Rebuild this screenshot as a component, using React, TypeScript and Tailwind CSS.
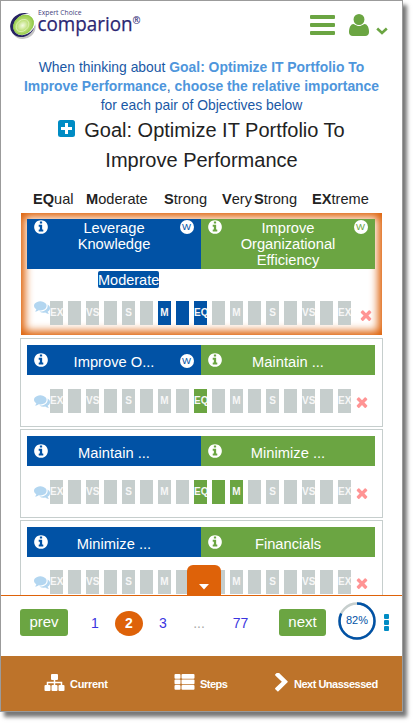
import React from "react";

type IconProps = { d: string; className?: string };

function Glyph({ d, className }: IconProps) {
  return (
    <svg viewBox="0 0 1792 1792" fill="currentColor" className={className}>
      <path d={d} />
    </svg>
  );
}

const USER =
  "M1600 1405q0 120-73 189.500t-194 69.500h-874q-121 0-194-69.500t-73-189.500q0-53 3.500-103.500t14-109 26.500-108.500 43-97.500 62-81 85.500-53.500 111.500-20q9 0 42 21.500t74.500 48 108 48 133.500 21.500 133.500-21.500 108-48 74.500-48 42-21.500q61 0 111.500 20t85.500 53.500 62 81 43 97.500 26.500 108.500 14 109 3.500 103.500zm-320-893q0 159-112.500 271.500t-271.500 112.500-271.500-112.500-112.500-271.500 112.500-271.500 271.500-112.500 271.500 112.500 112.500 271.500z";
const TIMES =
  "M1490 1322q0 40-28 68l-136 136q-28 28-68 28t-68-28l-294-294-294 294q-28 28-68 28t-68-28l-136-136q-28-28-28-68t28-68l294-294-294-294q-28-28-28-68t28-68l136-136q28-28 68-28t68 28l294 294 294-294q28-28 68-28t68 28l136 136q28 28 28 68t-28 68l-294 294 294 294q28 28 28 68z";
const INFO =
  "M1152 1376v-160q0-14-9-23t-23-9h-96v-512q0-14-9-23t-23-9h-320q-14 0-23 9t-9 23v160q0 14 9 23t23 9h96v320h-96q-14 0-23 9t-9 23v160q0 14 9 23t23 9h448q14 0 23-9t9-23zm-128-896v-160q0-14-9-23t-23-9h-192q-14 0-23 9t-9 23v160q0 14 9 23t23 9h192q14 0 23-9t9-23zm640 416q0 209-103 385.500t-279.500 279.500-385.500 103-385.500-103-279.500-279.500-103-385.500 103-385.500 279.500-279.500 385.500-103 385.500 103 279.500 279.500 103 385.500z";
const COMMENTS =
  "M1408 768q0 139-94 257t-256.500 186.500-353.500 68.500q-86 0-176-16-124 88-278 128-36 9-86 16h-3q-11 0-20.500-8t-11.500-21q-1-3-1-6.500t.5-6.500 2-6l2.500-5 3.500-5.500 4-5 4.500-5 4-4.500q5-6 23-25t26-29.500 22.500-29 25-38.500 20.500-44q-124-72-195-177t-71-224q0-139 94-257t256.500-186.500 353.500-68.500 353.500 68.500 256.500 186.500 94 257zm384 256q0 120-71 224.500t-195 176.500q10 24 20.500 44t25 38.500 22.500 29 26 29.500 23 25q1 1 4 4.500t4.500 5 4 5 3.500 5.500l2.500 5 2 6 .5 6.500-1 6.500q-3 14-13 22t-22 7q-50-7-86-16-154-40-278-128-90 16-176 16-271 0-472-132 58 4 88 4 161 0 309-45t264-129q125-92 192-212t67-254q0-77-23-152 129 71 204 178t75 230z";
const CHEVRON_RIGHT =
  "M1363 877l-742 742q-19 19-45 19t-45-19l-166-166q-19-19-19-45t19-45l531-531-531-531q-19-19-19-45t19-45l166-166q19-19 45-19t45 19l742 742q19 19 19 45t-19 45z";

function Logo() {
  return (
    <svg width="134" height="34" viewBox="0 0 134 34" className="ml-[7px] mt-[7px]">
      <defs>
        <radialGradient id="leaf" cx="0.45" cy="0.5" r="0.6">
          <stop offset="0" stopColor="#f4fbe2" />
          <stop offset="0.45" stopColor="#bfe07c" />
          <stop offset="1" stopColor="#8cc63f" />
        </radialGradient>
      </defs>
      <ellipse cx="15.500" cy="19" rx="12.500" ry="11.800" fill="#c4c4c4" transform="rotate(-40 15.500 19)" />
      <ellipse cx="14.500" cy="17" rx="13" ry="11.400" fill="#262262" transform="rotate(-40 14.500 17)" />
      <ellipse cx="16.500" cy="16.500" rx="12" ry="9.600" fill="#fff" transform="rotate(-40 16.500 16.500)" />
      <ellipse cx="15.500" cy="16.800" rx="10.800" ry="8.800" fill="url(#leaf)" stroke="#8cc63f" strokeWidth="0.800" transform="rotate(-40 15.500 16.800)" />
      <ellipse cx="14.500" cy="17.500" rx="7" ry="5.400" fill="none" stroke="#e5f4c4" strokeWidth="0.700" transform="rotate(-40 14.500 17.500)" />
      <text x="30" y="7" className="font-['Open_Sans',sans-serif]" fontSize="7" fill="#3f3c7c" textLength="43.500" lengthAdjust="spacingAndGlyphs">Expert Choice</text>
      <text x="29.500" y="23" className="font-['Open_Sans',sans-serif]" fontSize="19.500" fill="#2b2773" stroke="#2b2773" strokeWidth="0.250" textLength="95" lengthAdjust="spacingAndGlyphs">comparion</text>
      <text x="124.500" y="15.500" className="font-['Open_Sans',sans-serif]" fontSize="10" fontWeight="600" fill="#2b2773" textLength="8" lengthAdjust="spacingAndGlyphs">®</text>
    </svg>
  );
}

function Info() {
  return <Glyph d={INFO} className="block size-[16px] shrink-0" />;
}

function WBadge({ color }: { color: string }) {
  return (
    <span className={`flex size-[14px] shrink-0 items-center justify-center rounded-full bg-white text-[9.500px] leading-none ${color}`}>
      W
    </span>
  );
}

type HeadProps = { text: string; w?: boolean; tall?: boolean; left?: boolean };

function Head({ text, w, tall, left }: HeadProps) {
  return (
    <div
      className={`flex w-[174px] items-start justify-between pl-[5.500px] pr-[7.500px] text-white ${
        left ? "bg-[#0152a5]" : "bg-[#6ba542]"
      } ${tall ? "h-[50px]" : "h-[30px] pt-[7px]"}`}
    >
      <Info />
      <div className={`w-[118px] whitespace-pre-line text-center text-[14.700px] leading-[16px] ${tall ? "pt-px" : "pt-[2px]"}`}>{text}</div>
      {w ? (
        <div className={tall ? "pt-[0.500px]" : "pt-[1.500px]"}>
          <WBadge color={left ? "text-[#0152a5]" : "text-[#6ba542]"} />
        </div>
      ) : (
        <div className="w-[14px]" />
      )}
    </div>
  );
}

const LABELS = ["EX", "", "VS", "", "S", "", "M", "", "EQ", "", "M", "", "S", "", "VS", "", "EX"];

function Scale({ from, to, tone, first }: { from: number; to: number; tone: string; first?: boolean }) {
  return (
    <div className="flex h-[24px] pl-[7px]">
      <Glyph d={COMMENTS} className={`block size-[16px] shrink-0 text-[#b3d6f0] ${first ? "-mt-[2px]" : "mt-[3.500px]"}`} />
      <div className="flex gap-[5px]">
        {LABELS.map((label, i) => (
          <div
            key={i}
            className={`flex h-[24px] w-[13px] overflow-hidden text-[10px] font-bold leading-[23px] text-[#f7f7f7] ${
              i >= from && i <= to ? tone : "bg-[#c6cecd]"
            } ${label.length === 1 ? "justify-center" : "justify-start"}`}
          >
            {label}
          </div>
        ))}
      </div>
      <Glyph d={TIMES} className={`block size-[16px] shrink-0 text-[#ff9494] ${first ? "ml-[6.500px] mt-[5.500px]" : "ml-[2.500px] mt-[4.500px]"}`} />
    </div>
  );
}

type CardProps = { a: string; b: string; w?: boolean; from: number; to: number; gap?: string };

function Card({ a, b, w, from, to, gap = "h-[14px]" }: CardProps) {
  return (
    <div className="h-[89px] shrink-0 border border-[#c6cecd] px-[6px] pt-[6px]">
      <div className="flex">
        <Head text={a} w={w} left />
        <Head text={b} />
      </div>
      <div className={gap} />
      <Scale from={from} to={to} tone="bg-[#6ba542]" />
    </div>
  );
}

function Legend() {
  return (
    <div className="flex h-[20px] shrink-0 pl-[32px] text-[14.600px] leading-[20px] text-[#222]">
      <div className="w-[53px] whitespace-nowrap"><b>EQ</b>ual</div>
      <div className="w-[78px] whitespace-nowrap"><b>M</b>oderate</div>
      <div className="w-[58px] whitespace-nowrap"><b>S</b>trong</div>
      <div className="w-[32px] whitespace-nowrap"><b>V</b>ery</div>
      <div className="w-[58px] whitespace-nowrap"><b>S</b>trong</div>
      <div className="whitespace-nowrap"><b>EX</b>treme</div>
    </div>
  );
}

function Pager() {
  return (
    <div className="flex h-[60px] items-start pl-[19px] text-[14px] text-[#3b35e0]">
      <div className="mt-[13px] flex h-[27px] w-[48px] items-center justify-center rounded-[3px] bg-[#6ba542] pb-px text-[15px] text-white">prev</div>
      <div className="mt-[17px] w-[47px] pl-px text-center leading-[20px]"><span className="pl-[6px]">1</span></div>
      <div className="mt-[15px] flex h-[25px] w-[28px] items-center justify-center rounded-[50%] bg-[#de6209] pb-px text-[14px] font-bold text-white">2</div>
      <div className="mt-[17px] w-[40px] text-center leading-[20px]">3</div>
      <div className="mt-[17px] w-[32px] text-center leading-[20px] text-[#aaa]">...</div>
      <div className="mt-[17px] w-[51px] text-center leading-[20px]">77</div>
      <div className="ml-[13px] mt-[13px] flex h-[27px] w-[47px] items-center justify-center rounded-[3px] bg-[#6ba542] pb-px text-[15px] text-white">next</div>
      <div className="ml-[12px] mt-[6px] grid size-[38px] place-items-center">
        <svg width="38" height="38" viewBox="0 0 38 38" className="col-start-1 row-start-1">
          <circle cx="19" cy="19" r="17.500" fill="none" stroke="#c6cecd" strokeWidth="2.500" />
          <circle
            cx="19" cy="19" r="17.500" fill="none" stroke="#0152a5" strokeWidth="2.500"
            pathLength="100" strokeDasharray="82 18" transform="rotate(-90 19 19)"
          />
        </svg>
        <span className="col-start-1 row-start-1 pb-[2px] text-[11px] leading-none text-[#0152a5]">82%</span>
      </div>
      <div className="ml-[8px] mt-[18px] flex flex-col gap-[1px]">
        <i className="h-[5px] w-[5px] rounded-[1px] bg-[#008cc4]" />
        <i className="h-[5px] w-[5px] rounded-[1px] bg-[#008cc4]" />
        <i className="h-[5px] w-[5px] rounded-[1px] bg-[#008cc4]" />
      </div>
    </div>
  );
}

function BottomBar() {
  return (
    <div className="flex h-[55px] items-start bg-[#bd732a] text-[11px] font-bold leading-[14px] tracking-[-0.500px] text-white">
      <div className="flex w-[173px] pl-[43px] pt-[18px]">
        <svg width="21" height="17" viewBox="0 0 21 17" fill="currentColor">
          <rect x="7" y="0" width="7" height="6" rx="1" />
          <rect x="0.500" y="11" width="6" height="6" rx="1" />
          <rect x="7.500" y="11" width="6" height="6" rx="1" />
          <rect x="14.500" y="11" width="6" height="6" rx="1" />
          <path d="M3.500 12V8.500h14V12M10.500 5v7" fill="none" stroke="currentColor" strokeWidth="1.500" />
        </svg>
        <span className="ml-[5px] mt-[3px] tracking-[-0.300px]">Current</span>
      </div>
      <div className="flex w-[101px] pt-[18px]">
        <svg width="21" height="16" viewBox="0 0 21 16" fill="currentColor">
          {[0, 5.5, 11].map((y) => (
            <g key={y}>
              <rect x="0.500" y={y} width="6" height="4.700" rx="1" />
              <rect x="7.500" y={y} width="13" height="4.700" rx="1" />
            </g>
          ))}
        </svg>
        <span className="ml-[5px] mt-[3px]">Steps</span>
      </div>
      <div className="flex pt-[17px]">
        <svg width="13" height="19" viewBox="340 100 1060 1590" fill="currentColor" preserveAspectRatio="none">
          <path d={CHEVRON_RIGHT} />
        </svg>
        <span className="ml-[6px] mt-[4px] whitespace-nowrap">Next Unassessed</span>
      </div>
    </div>
  );
}

export default function App() {
  return (
    <div className="h-[727px] w-[417px] overflow-hidden bg-white font-['Liberation_Sans',Arial,sans-serif]">
      <div className="flex h-[712px] w-[403px] flex-col border border-[#9b9b9b] bg-white shadow-[4px_5px_4px_0px_#777]">
        <header className="flex h-[57px] shrink-0 items-start">
          <Logo />
          <div className="ml-[168px] mt-[14px] flex w-[25px] flex-col gap-[4px]">
            <i className="h-[4px] rounded-[1px] bg-[#6ba542]" />
            <i className="h-[4px] rounded-[1px] bg-[#6ba542]" />
            <i className="h-[4px] rounded-[1px] bg-[#6ba542]" />
          </div>
          <svg width="20" height="22" viewBox="192 128 1408 1536" preserveAspectRatio="none" className="ml-[14px] mt-[13px]" fill="#6ba542">
            <path d={USER} />
          </svg>
          <svg width="12" height="8" viewBox="0 0 12 8" className="ml-[7px] mt-[26px]">
            <path d="M1.200 1.500 6 6l4.800-4.500" fill="none" stroke="#6ba542" strokeWidth="2.600" />
          </svg>
        </header>

        <p className="h-[57px] shrink-0 whitespace-nowrap text-center text-[13.900px] leading-[19px] text-[#1a58a5]">
          When thinking about <b className="text-[#4e96dc]">Goal: Optimize IT Portfolio To</b>
          <br />
          <b className="text-[#4e96dc]">Improve Performance</b>, <b className="text-[#4e96dc]">choose the relative importance</b>
          <br />
          for each pair of Objectives below
        </p>

        <h1 className="h-[74px] shrink-0 whitespace-nowrap text-center text-[20px] leading-[30px] text-[#222]">
          <svg width="17" height="17" viewBox="0 0 17 17" className="mr-[9px] inline-block align-[0px]">
            <rect width="17" height="17" rx="2.500" fill="#008cc4" />
            <path d="M8.500 3v11M3 8.500h11" stroke="#fff" strokeWidth="3" />
          </svg>
          Goal: Optimize IT Portfolio To
          <br />
          Improve Performance
        </h1>

        <Legend />

        <main className="flex h-[386px] shrink-0 flex-col gap-[2px] overflow-hidden pl-[19px] pr-[19px] pt-[4px]">
          <section className="mx-px mb-px h-[122px] shrink-0 bg-white p-[6px] shadow-[inset_0_0_9px_4px_#de6209]">
            <div className="flex">
              <Head text={"Leverage\nKnowledge"} w tall left />
              <Head text={"Improve\nOrganizational\nEfficiency"} w tall />
            </div>
            <div className="flex h-[32px] pl-[71px] pt-[2px]">
              <span className="h-[17px] rounded-[2px] bg-[#0152a5] text-[14.500px] leading-[18px] text-white">Moderate</span>
            </div>
            <Scale from={6} to={8} tone="bg-[#0152a5]" first />
          </section>
          <Card a="Improve O..." b="Maintain ..." w from={8} to={8} />
          <Card a="Maintain ..." b="Minimize ..." from={8} to={10} />
          <Card a="Minimize ..." b="Financials" from={8} to={8} gap="h-[13px]" />
        </main>

        <footer className="relative shrink-0 border-t border-[#de6209]">
          <div className="absolute -top-[31px] left-[186px] flex h-[31px] w-[34px] justify-center rounded-t-[6px] bg-[#de6209] pt-[19px]">
            <svg width="10" height="6" viewBox="0 0 10 6" fill="#fff">
              <path d="M0 0h10L5 5.500z" />
            </svg>
          </div>
          <Pager />
          <BottomBar />
        </footer>
      </div>
    </div>
  );
}
